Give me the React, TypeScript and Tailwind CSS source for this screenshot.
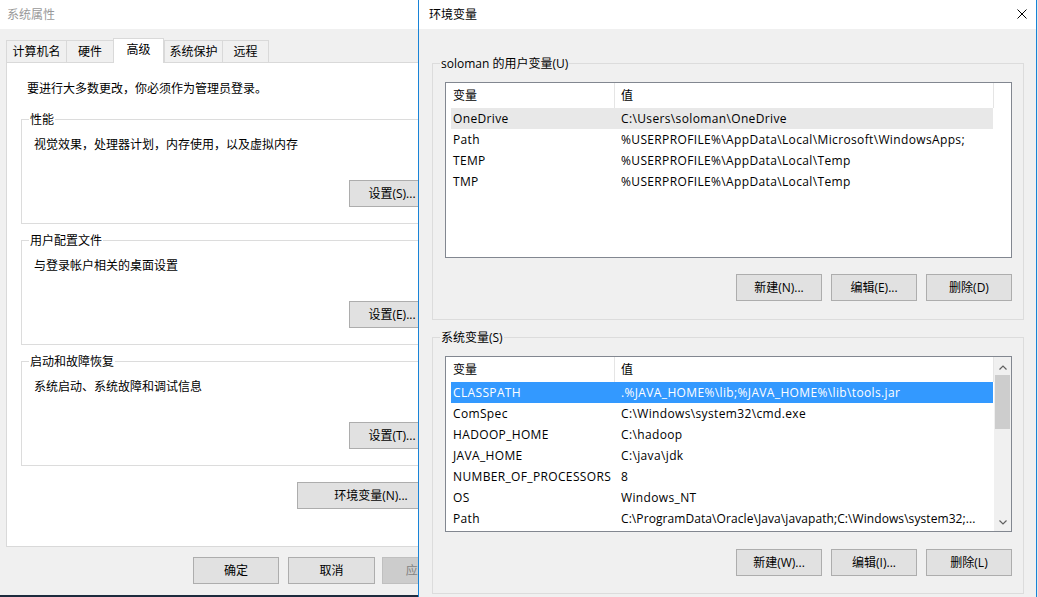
import React from "react";

type Row = { name: string; value: string; tight?: boolean };

const userRows: Row[] = [
  { name: "OneDrive", value: "C:\\Users\\soloman\\OneDrive" },
  { name: "Path", value: "%USERPROFILE%\\AppData\\Local\\Microsoft\\WindowsApps;" },
  { name: "TEMP", value: "%USERPROFILE%\\AppData\\Local\\Temp" },
  { name: "TMP", value: "%USERPROFILE%\\AppData\\Local\\Temp" },
];

const sysRows: Row[] = [
  { name: "CLASSPATH", value: ".%JAVA_HOME%\\lib;%JAVA_HOME%\\lib\\tools.jar" },
  { name: "ComSpec", value: "C:\\Windows\\system32\\cmd.exe" },
  { name: "HADOOP_HOME", value: "C:\\hadoop" },
  { name: "JAVA_HOME", value: "C:\\java\\jdk" },
  { name: "NUMBER_OF_PROCESSORS", value: "8" },
  { name: "OS", value: "Windows_NT" },
  { name: "Path", value: "C:\\ProgramData\\Oracle\\Java\\javapath;C:\\Windows\\system32;...", tight: true },
];

function Btn({
  children,
  className = "",
  disabled = false,
}: {
  children: React.ReactNode;
  className?: string;
  disabled?: boolean;
}) {
  return (
    <div
      className={`h-[27px] shrink-0 flex items-center justify-center border whitespace-nowrap ${
        disabled
          ? "border-[#bfbfbf] bg-[#cccccc] text-[#838383]"
          : "border-[#adadad] bg-[#e1e1e1] text-black"
      } ${className}`}
    >
      {children}
    </div>
  );
}

function Group({
  label,
  labelBg,
  className = "",
  children,
}: {
  label: string;
  labelBg: string;
  className?: string;
  children: React.ReactNode;
}) {
  return (
    <div className={`relative shrink-0 border border-[#dcdcdc] flex flex-col ${className}`}>
      <span className={`absolute left-[7px] -top-[8px] px-[1px] leading-[16px] whitespace-nowrap ${labelBg}`}>
        {label}
      </span>
      {children}
    </div>
  );
}

function Tab({ w, selected = false, last = false, children }: { w: string; selected?: boolean; last?: boolean; children: React.ReactNode }) {
  if (selected) {
    return (
      <div className={`${w} h-[25px] -mb-px relative z-10 bg-white border-x border-t border-[#d9d9d9] flex items-center justify-center pb-[2px]`}>
        {children}
      </div>
    );
  }
  return (
    <div
      className={`${w} h-[22px] bg-[#f0f0f0] border-l border-t ${last ? "border-r" : ""} border-[#d9d9d9] flex items-center justify-center`}
    >
      {children}
    </div>
  );
}

function Chevron({ up }: { up: boolean }) {
  return (
    <svg width="8" height="5" viewBox="0 0 8 5">
      <polyline
        points={up ? "0.5,4.5 4,1 7.5,4.5" : "0.5,0.5 4,4 7.5,0.5"}
        fill="none"
        stroke="#606060"
        strokeWidth="1.2"
      />
    </svg>
  );
}

function ListView({
  rows,
  selectedActive,
  className = "",
  scrollbar = false,
}: {
  rows: Row[];
  selectedActive: boolean;
  className?: string;
  scrollbar?: boolean;
}) {
  return (
    <div className={`w-[567px] h-[176px] shrink-0 border border-[#828790] bg-white flex ${className}`}>
      <div className="w-[548px] flex flex-col overflow-hidden">
        <div className="h-[25px] shrink-0 flex">
          <div className="w-[169px] border-r border-[#e5e5e5] pl-[7px] flex items-center">变量</div>
          <div className="w-[379px] border-r border-[#e5e5e5] pl-[6px] flex items-center">值</div>
        </div>
        {rows.map((r, i) => {
          const sel = i === 0;
          const cls = sel
            ? selectedActive
              ? "bg-[#3399ff] text-white"
              : "bg-[#e8e8e8] text-black"
            : "text-black";
          return (
            <div key={r.name + i} className={`ml-[5px] w-[542px] h-[21px] shrink-0 flex items-center ${cls}`}>
              <div className="w-[170px] shrink-0 pl-[2px] whitespace-nowrap tracking-[0.35px]">{r.name}</div>
              <div
                className={`flex-1 whitespace-nowrap overflow-hidden ${
                  r.tight ? "tracking-[0.08px]" : "tracking-[0.36px]"
                }`}
              >
                {r.value}
              </div>
            </div>
          );
        })}
      </div>
      {scrollbar ? (
        <div className="w-[17px] flex flex-col bg-[#f0f0f0]">
          <div className="h-[17px] shrink-0 flex items-center justify-center pt-[3px]">
            <Chevron up />
          </div>
          <div className="mt-[1px] mx-[1px] h-[54px] bg-[#cdcdcd]" />
          <div className="flex-1" />
          <div className="h-[17px] shrink-0 flex items-center justify-center pb-[1px]">
            <Chevron up={false} />
          </div>
        </div>
      ) : (
        <div className="w-[17px]" />
      )}
    </div>
  );
}

function LeftWindow() {
  return (
    <div className="w-[418px] h-[597px] shrink-0 overflow-hidden flex flex-col">
      <div className="h-[29px] w-[480px] shrink-0 bg-white flex items-center pl-[7px] text-[#999999]">系统属性</div>
      <div className="h-[566px] w-[480px] shrink-0 bg-[#f0f0f0] flex flex-col">
        <div className="mt-[9px] ml-[6px] h-[24px] shrink-0 flex items-end">
          <Tab w="w-[60px]">计算机名</Tab>
          <Tab w="w-[47px]">硬件</Tab>
          <Tab w="w-[51px]" selected>
            高级
          </Tab>
          <Tab w="w-[58px]">系统保护</Tab>
          <Tab w="w-[47px]" last>
            远程
          </Tab>
        </div>
        <div className="ml-[6px] w-[460px] h-[485px] shrink-0 bg-white border border-[#d9d9d9] flex flex-col">
          <div className="mt-[17px] ml-[20px] h-[18px] leading-[18px] whitespace-nowrap">
            要进行大多数更改，你必须作为管理员登录。
          </div>
          <Group label="性能" labelBg="bg-white" className="mt-[21px] ml-[14px] w-[426px] h-[105px]">
            <div className="mt-[16px] ml-[12px] h-[18px] leading-[18px] whitespace-nowrap">
              视觉效果，处理器计划，内存使用，以及虚拟内存
            </div>
            <Btn className="mt-[26px] ml-[327px] w-[86px]">设置(S)...</Btn>
          </Group>
          <Group label="用户配置文件" labelBg="bg-white" className="mt-[16px] ml-[14px] w-[426px] h-[105px]">
            <div className="mt-[16px] ml-[12px] h-[18px] leading-[18px] whitespace-nowrap">与登录帐户相关的桌面设置</div>
            <Btn className="mt-[26px] ml-[327px] w-[86px]">设置(E)...</Btn>
          </Group>
          <Group label="启动和故障恢复" labelBg="bg-white" className="mt-[16px] ml-[14px] w-[426px] h-[105px]">
            <div className="mt-[16px] ml-[12px] h-[18px] leading-[18px] whitespace-nowrap">
              系统启动、系统故障和调试信息
            </div>
            <Btn className="mt-[26px] ml-[327px] w-[86px]">设置(T)...</Btn>
          </Group>
          <Btn className="mt-[16px] ml-[290px] w-[148px]">环境变量(N)...</Btn>
        </div>
        <div className="mt-[10px] flex">
          <Btn className="ml-[193px] w-[86px]">确定</Btn>
          <Btn className="ml-[9px] w-[87px]">取消</Btn>
          <Btn className="ml-[7px] w-[86px]" disabled>
            应用(A)
          </Btn>
        </div>
      </div>
      <div className="h-[2px] w-[480px] shrink-0 bg-[#1d2b3d]" />
    </div>
  );
}

function RightWindow() {
  return (
    <div className="w-[619px] h-[597px] shrink-0 border-x border-[#1883d7] bg-[#f0f0f0] flex flex-col">
      <div className="h-[29px] shrink-0 bg-white flex items-center justify-between pl-[10px] pr-[9px]">
        <span>环境变量</span>
        <svg width="10" height="10" viewBox="0 0 10 10" className="mb-[2px]">
          <path d="M0.5 0.5L9.5 9.5M9.5 0.5L0.5 9.5" stroke="#000" strokeWidth="1" />
        </svg>
      </div>
      <Group
        label="soloman 的用户变量(U)"
        labelBg="bg-[#f0f0f0]"
        className="mt-[34px] ml-[13px] w-[592px] h-[257px]"
      >
        <ListView rows={userRows} selectedActive={false} className="mt-[18px] ml-[12px]" />
        <div className="mt-[16px] ml-[303px] flex gap-[9px]">
          <Btn className="w-[86px]">新建(N)...</Btn>
          <Btn className="w-[86px]">编辑(E)...</Btn>
          <Btn className="w-[86px]">删除(D)</Btn>
        </div>
      </Group>
      <Group label="系统变量(S)" labelBg="bg-[#f0f0f0]" className="mt-[17px] ml-[13px] w-[592px] h-[257px]">
        <ListView rows={sysRows} selectedActive scrollbar className="mt-[18px] ml-[12px]" />
        <div className="mt-[17px] ml-[303px] flex gap-[9px]">
          <Btn className="w-[86px]">新建(W)...</Btn>
          <Btn className="w-[86px]">编辑(I)...</Btn>
          <Btn className="w-[86px]">删除(L)</Btn>
        </div>
      </Group>
    </div>
  );
}

export default function App() {
  return (
    <div className="w-[1038px] h-[597px] flex overflow-hidden bg-[#e8e8e8] text-[12px] text-black font-['Open_Sans','Noto_Sans_CJK_SC',sans-serif]">
      <LeftWindow />
      <RightWindow />
    </div>
  );
}
